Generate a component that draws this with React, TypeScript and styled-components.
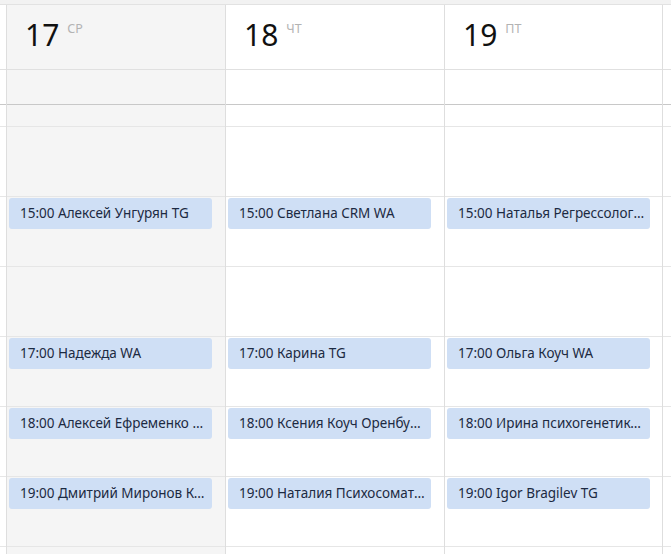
import React from 'react';
import styled, { createGlobalStyle } from 'styled-components';

const GlobalStyle = createGlobalStyle`
    html, body {
        margin: 0;
        padding: 0;
        background: #ffffff;
    }
    body {
        font-family: "Segoe UI", "Noto Sans", "Liberation Sans", sans-serif;
    }
`;

type DayData = {
    num: number;
    weekday: string;
    muted: boolean;
    width: number;
    events: Record<number, string>;
};

const HOURS = [14, 15, 16, 17, 18, 19, 20];

const DAYS: DayData[] = [
    {
        num: 17,
        weekday: 'СР',
        muted: true,
        width: 219,
        events: {
            15: '15:00 Алексей Унгурян TG',
            17: '17:00 Надежда WA',
            18: '18:00 Алексей Ефременко TG',
            19: '19:00 Дмитрий Миронов Коуч WA',
        },
    },
    {
        num: 18,
        weekday: 'ЧТ',
        muted: false,
        width: 219,
        events: {
            15: '15:00 Светлана CRM WA',
            17: '17:00 Карина TG',
            18: '18:00 Ксения Коуч Оренбург WA',
            19: '19:00 Наталия Психосоматика TG',
        },
    },
    {
        num: 19,
        weekday: 'ПТ',
        muted: false,
        width: 218,
        events: {
            15: '15:00 Наталья Регрессолог WA',
            17: '17:00 Ольга Коуч WA',
            18: '18:00 Ирина психогенетика TG',
            19: '19:00 Igor Bragilev TG',
        },
    },
];

const Page = styled.div`
    width: 671px;
    height: 554px;
    overflow: hidden;
    background: #ffffff;
`;

const TopStrip = styled.div`
    height: 4px;
    background: #f2f2f2;
    border-bottom: 1px solid #e2e2e2;
`;

const Board = styled.div`
    display: flex;
    align-items: stretch;
`;

const Column = styled.div<{ $width?: number; $muted?: boolean; $edge?: boolean }>`
    box-sizing: border-box;
    flex: ${({ $width }) => ($width ? `0 0 ${$width}px` : '1 1 auto')};
    min-width: 0;
    overflow: hidden;
    display: flex;
    flex-direction: column;
    background: ${({ $muted }) => ($muted ? '#f5f5f5' : '#ffffff')};
    border-left: ${({ $edge }) => ($edge ? '1px solid #dedede' : 'none')};
`;

const HeaderCell = styled.div`
    box-sizing: border-box;
    height: 65px;
    padding: 15px 0 0 18px;
    display: flex;
    align-items: flex-start;
    border-bottom: 1px solid #e0e0e0;
`;

const DayNumber = styled.span`
    font-size: 30px;
    line-height: 30px;
    color: #111111;
`;

const Weekday = styled.span`
    margin: 3px 0 0 8px;
    font-size: 12.5px;
    line-height: 12px;
    color: #b3b3b3;
`;

const AllDayCell = styled.div`
    box-sizing: border-box;
    height: 35px;
    border-bottom: 1px solid #c8c8c8;
`;

const PartialCell = styled.div`
    box-sizing: border-box;
    height: 22px;
    border-bottom: 1px solid #e6e6e6;
`;

const HourCell = styled.div`
    box-sizing: border-box;
    height: 70px;
    padding: 1px 0 0 2px;
    border-bottom: 1px solid #e6e6e6;
`;

const Event = styled.div`
    box-sizing: border-box;
    width: 203px;
    height: 31px;
    padding: 0 5px 0 11px;
    border-radius: 3px;
    background: #cfdff5;
    color: #1c2a42;
    font-size: 13.5px;
    line-height: 31px;
    white-space: nowrap;
    overflow: hidden;
    text-overflow: ellipsis;
`;

const GridCells = ({ events }: { events?: Record<number, string> }) => (
    <>
        <AllDayCell />
        <PartialCell />
        {HOURS.map((h) => (
            <HourCell key={h}>{events && events[h] ? <Event>{events[h]}</Event> : null}</HourCell>
        ))}
    </>
);

const DayColumn = ({ day }: { day: DayData }) => (
    <Column $width={day.width} $muted={day.muted} $edge>
        <HeaderCell>
            <DayNumber>{day.num}</DayNumber>
            <Weekday>{day.weekday}</Weekday>
        </HeaderCell>
        <GridCells events={day.events} />
    </Column>
);

const Gutter = ({ width, edge }: { width?: number; edge?: boolean }) => (
    <Column $width={width} $edge={edge}>
        <HeaderCell />
        <GridCells />
    </Column>
);

export default function App() {
    return (
        <Page>
            <GlobalStyle />
            <TopStrip />
            <Board>
                <Gutter width={6} />
                {DAYS.map((d) => (
                    <DayColumn key={d.num} day={d} />
                ))}
                <Gutter edge />
            </Board>
        </Page>
    );
}
